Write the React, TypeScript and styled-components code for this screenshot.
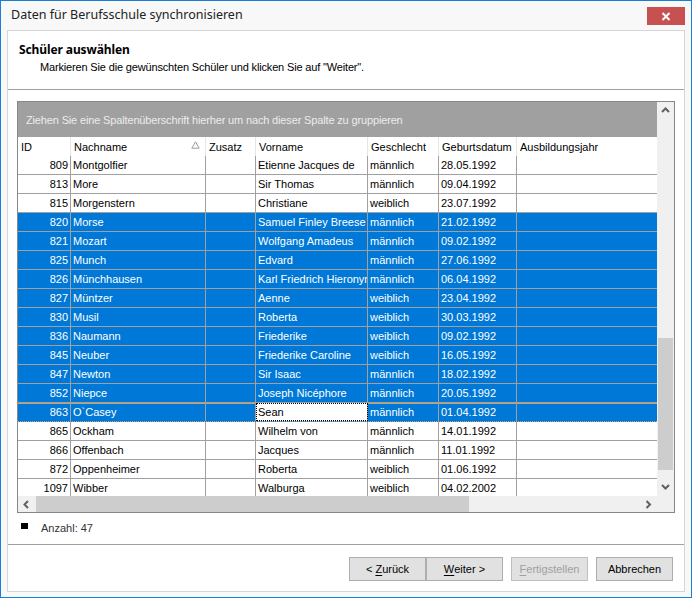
import React from "react";
import styled, { createGlobalStyle, css } from "styled-components";

const GlobalStyle = createGlobalStyle`
  html, body { margin: 0; padding: 0; overflow: hidden; background: #fff; }
  * { box-sizing: border-box; }
`;

const UI = `"Liberation Sans", Arial, sans-serif`;
const TITLE_FONT = `"Noto Sans", "Open Sans", sans-serif`;

const Window = styled.div`
  width: 692px;
  height: 598px;
  border: 1px solid #1a7fd4;
  background: #f8f8f8;
  display: flex;
  flex-direction: column;
  font-family: ${UI};
  font-size: 11px;
  color: #000;
`;

const TitleBar = styled.div`
  height: 29px;
  display: flex;
  align-items: flex-start;
  justify-content: space-between;
  padding: 0 6px 0 10px;
`;

const Title = styled.div`
  margin-top: 5px;
  font-family: ${TITLE_FONT};
  font-size: 12.5px;
  color: #222;
`;

const CloseButton = styled.div`
  margin-top: 6px;
  width: 38px;
  height: 18px;
  background: #c75050;
  display: flex;
  align-items: center;
  justify-content: center;
`;

const Frame = styled.div`
  flex: 1;
  display: flex;
  padding: 0 6px 5px 6px;
`;

const Panel = styled.div`
  flex: 1;
  border: 1px solid #d5d5d5;
  background: #fff;
  display: flex;
  flex-direction: column;
`;

const Header = styled.div`
  height: 58px;
  padding: 10px 0 0 11px;
`;

const HeaderTitle = styled.div`
  font-family: ${TITLE_FONT};
  font-weight: 700;
  font-size: 12px;
  line-height: 17px;
  letter-spacing: -0.1px;
`;

const HeaderSub = styled.div`
  margin-top: 1px;
  padding-left: 21px;
  line-height: 17px;
  letter-spacing: -0.16px;
`;

const Separator = styled.div`
  height: 1px;
  background: #a0a0a0;
`;

const Body = styled.div`
  padding: 11px 9px 0 9px;
`;

const Grid = styled.div`
  height: 412px;
  border: 1px solid #828790;
  display: grid;
  grid-template-columns: 639px 17px;
  overflow: hidden;
`;

const GridMain = styled.div`
  display: flex;
  flex-direction: column;
  min-width: 0;
`;

const GroupPanel = styled.div`
  height: 35px;
  background: #a0a0a0;
  color: #ececec;
  padding: 10px 0 0 8px;
  line-height: 16px;
  letter-spacing: -0.15px;
  white-space: nowrap;
`;

const COLS = "53px 135px 50px 112px 71px 78px 140px";

const HeaderRow = styled.div`
  height: 19px;
  display: grid;
  grid-template-columns: ${COLS};
  background: #fff;
`;

const HeaderCell = styled.div`
  border-right: 1px solid #e6e6e6;
  padding: 1px 3px 0 3px;
  line-height: 17px;
  display: flex;
  justify-content: space-between;
  align-items: center;
  white-space: nowrap;
  &:last-child { border-right: none; }
`;

const SortGlyph = styled.svg`
  margin-right: 2px;
  margin-top: -5px;
`;

const RowsArea = styled.div`
  height: 340px;
  overflow: hidden;
`;

const Row = styled.div<{ $selected?: boolean; $focused?: boolean }>`
  height: 19px;
  display: grid;
  grid-template-columns: ${COLS};
  border-bottom: 1px solid #a0a0a0;
  background: ${(p) => (p.$selected ? "#0078d7" : "#fff")};
  color: ${(p) => (p.$selected ? "#fff" : "#000")};
  ${(p) =>
    p.$focused &&
    css`
      border-bottom: 1px dotted #c9a36f;
      box-shadow: inset 0 1px 0 0 #c9a36f;
    `}
`;

const Cell = styled.div<{ $right?: boolean; $focus?: boolean }>`
  border-right: 1px solid #a0a0a0;
  padding: 0 2px;
  line-height: 18px;
  white-space: nowrap;
  overflow: hidden;
  text-overflow: clip;
  text-align: ${(p) => (p.$right ? "right" : "left")};
  &:last-child { border-right: none; }
  ${(p) =>
    p.$focus &&
    css`
      background: #fff;
      color: #000;
      outline: 1px dotted #000;
      outline-offset: -1px;
    `}
`;

const HScroll = styled.div`
  height: 16px;
  background: #f0f0f0;
  display: flex;
  align-items: stretch;
`;

const ArrowBox = styled.div<{ $w?: number; $h?: number }>`
  width: ${(p) => (p.$w ? `${p.$w}px` : "auto")};
  height: ${(p) => (p.$h ? `${p.$h}px` : "auto")};
  flex: none;
  display: flex;
  align-items: center;
  justify-content: center;
`;

const HThumb = styled.div`
  width: 433px;
  background: #cdcdcd;
  margin-left: 1px;
`;

const Spacer = styled.div`
  flex: 1;
`;

const VScroll = styled.div`
  background: #f0f0f0;
  display: flex;
  flex-direction: column;
`;

const VTrack = styled.div`
  height: 360px;
  display: flex;
  flex-direction: column;
  padding: 0 1px;
`;

const VThumb = styled.div<{ $top: number; $h: number }>`
  margin-top: ${(p) => p.$top}px;
  height: ${(p) => p.$h}px;
  background: #cdcdcd;
`;

const Footer = styled.div`
  height: 31px;
  display: flex;
  align-items: center;
  padding: 0 0 0 13px;
  gap: 13px;
`;

const Bullet = styled.div`
  width: 7px;
  height: 6px;
  background: #000;
  margin-top: -6px;
`;

const CountText = styled.div`
  color: #333;
  margin-top: -1px;
`;

const ButtonBar = styled.div`
  flex: 1;
  display: flex;
  justify-content: flex-end;
  align-items: flex-start;
  padding: 12px 11px 0 0;
`;

const ButtonGroup = styled.div`
  display: flex;
  gap: 8px;
`;

const Pair = styled.div`
  display: flex;
`;

const Button = styled.div<{ $disabled?: boolean }>`
  width: 77px;
  height: 24px;
  background: #e1e1e1;
  border: 1px solid ${(p) => (p.$disabled ? "#bfbfbf" : "#adadad")};
  color: ${(p) => (p.$disabled ? "#a0a0a0" : "#000")};
  display: flex;
  align-items: center;
  justify-content: center;
  padding-bottom: 1px;
  & u { text-decoration: underline; text-underline-offset: 2px; }
`;

type Student = {
  id: number;
  last: string;
  first: string;
  sex: string;
  born: string;
  sel?: boolean;
  focus?: boolean;
};

const students: Student[] = [
  { id: 809, last: "Montgolfier", first: "Etienne Jacques de", sex: "männlich", born: "28.05.1992" },
  { id: 813, last: "More", first: "Sir Thomas", sex: "männlich", born: "09.04.1992" },
  { id: 815, last: "Morgenstern", first: "Christiane", sex: "weiblich", born: "23.07.1992" },
  { id: 820, last: "Morse", first: "Samuel Finley Breese", sex: "männlich", born: "21.02.1992", sel: true },
  { id: 821, last: "Mozart", first: "Wolfgang Amadeus", sex: "männlich", born: "09.02.1992", sel: true },
  { id: 825, last: "Munch", first: "Edvard", sex: "männlich", born: "27.06.1992", sel: true },
  { id: 826, last: "Münchhausen", first: "Karl Friedrich Hieronymus", sex: "männlich", born: "06.04.1992", sel: true },
  { id: 827, last: "Müntzer", first: "Aenne", sex: "weiblich", born: "23.04.1992", sel: true },
  { id: 830, last: "Musil", first: "Roberta", sex: "weiblich", born: "30.03.1992", sel: true },
  { id: 836, last: "Naumann", first: "Friederike", sex: "weiblich", born: "09.02.1992", sel: true },
  { id: 845, last: "Neuber", first: "Friederike Caroline", sex: "weiblich", born: "16.05.1992", sel: true },
  { id: 847, last: "Newton", first: "Sir Isaac", sex: "männlich", born: "18.02.1992", sel: true },
  { id: 852, last: "Niepce", first: "Joseph Nicéphore", sex: "männlich", born: "20.05.1992", sel: true },
  { id: 863, last: "O`Casey", first: "Sean", sex: "männlich", born: "01.04.1992", sel: true, focus: true },
  { id: 865, last: "Ockham", first: "Wilhelm von", sex: "männlich", born: "14.01.1992" },
  { id: 866, last: "Offenbach", first: "Jacques", sex: "männlich", born: "11.01.1992" },
  { id: 872, last: "Oppenheimer", first: "Roberta", sex: "weiblich", born: "01.06.1992" },
  { id: 1097, last: "Wibber", first: "Walburga", sex: "weiblich", born: "04.02.2002" },
];

const Chevron = ({ dir }: { dir: "up" | "down" | "left" | "right" }) => {
  const d: Record<string, string> = {
    up: "M1 6 L4.5 2.5 L8 6",
    down: "M1 2 L4.5 5.5 L8 2",
    left: "M6 1 L2.5 4.5 L6 8",
    right: "M2.5 1 L6 4.5 L2.5 8",
  };
  return (
    <svg width="9" height="9" viewBox="0 0 9 9">
      <path d={d[dir]} fill="none" stroke="#606060" strokeWidth="2" />
    </svg>
  );
};

export default function App() {
  return (
    <>
      <GlobalStyle />
      <Window>
        <TitleBar>
          <Title>Daten für Berufsschule synchronisieren</Title>
          <CloseButton>
            <svg width="10" height="9" viewBox="0 0 10 9">
              <path d="M1.5 1 L8.5 8 M8.5 1 L1.5 8" stroke="#fff" strokeWidth="2" />
            </svg>
          </CloseButton>
        </TitleBar>
        <Frame>
          <Panel>
            <Header>
              <HeaderTitle>Schüler auswählen</HeaderTitle>
              <HeaderSub>Markieren Sie die gewünschten Schüler und klicken Sie auf "Weiter".</HeaderSub>
            </Header>
            <Separator />
            <Body>
              <Grid>
                <GridMain>
                  <GroupPanel>
                    Ziehen Sie eine Spaltenüberschrift hierher um nach dieser Spalte zu gruppieren
                  </GroupPanel>
                  <HeaderRow>
                    <HeaderCell>ID</HeaderCell>
                    <HeaderCell>
                      Nachname
                      <SortGlyph width="9" height="8" viewBox="0 0 9 8">
                        <path d="M4.5 0.8 L8.2 7.2 L0.8 7.2 Z" fill="none" stroke="#9a9a9a" strokeWidth="1" />
                      </SortGlyph>
                    </HeaderCell>
                    <HeaderCell>Zusatz</HeaderCell>
                    <HeaderCell>Vorname</HeaderCell>
                    <HeaderCell>Geschlecht</HeaderCell>
                    <HeaderCell>Geburtsdatum</HeaderCell>
                    <HeaderCell>Ausbildungsjahr</HeaderCell>
                  </HeaderRow>
                  <RowsArea>
                    {students.map((s) => (
                      <Row key={s.id} $selected={s.sel} $focused={s.focus}>
                        <Cell $right>{s.id}</Cell>
                        <Cell>{s.last}</Cell>
                        <Cell></Cell>
                        <Cell $focus={s.focus}>{s.first}</Cell>
                        <Cell>{s.sex}</Cell>
                        <Cell>{s.born}</Cell>
                        <Cell></Cell>
                      </Row>
                    ))}
                  </RowsArea>
                  <HScroll>
                    <ArrowBox $w={17}>
                      <Chevron dir="left" />
                    </ArrowBox>
                    <HThumb />
                    <Spacer />
                    <ArrowBox $w={17}>
                      <Chevron dir="right" />
                    </ArrowBox>
                  </HScroll>
                </GridMain>
                <VScroll>
                  <ArrowBox $h={17}>
                    <Chevron dir="up" />
                  </ArrowBox>
                  <VTrack>
                    <VThumb $top={219} $h={132} />
                  </VTrack>
                  <ArrowBox $h={17}>
                    <Chevron dir="down" />
                  </ArrowBox>
                </VScroll>
              </Grid>
            </Body>
            <Footer>
              <Bullet />
              <CountText>Anzahl: 47</CountText>
            </Footer>
            <Separator />
            <ButtonBar>
              <ButtonGroup>
                <Pair>
                  <Button>
                    &lt;&nbsp;<u>Z</u>urück
                  </Button>
                  <Button>
                    <u>W</u>eiter &gt;
                  </Button>
                </Pair>
                <Button $disabled>
                  <u>F</u>ertigstellen
                </Button>
                <Button>Abbrechen</Button>
              </ButtonGroup>
            </ButtonBar>
          </Panel>
        </Frame>
      </Window>
    </>
  );
}
